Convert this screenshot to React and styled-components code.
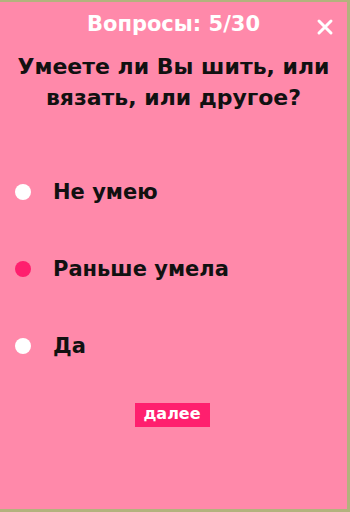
import React, { useState } from "react";
import styled, { createGlobalStyle } from "styled-components";

const GlobalStyle = createGlobalStyle`
  html, body {
    margin: 0;
    padding: 0;
    background: #b3b27d;
  }
`;

const Screen = styled.div`
  box-sizing: border-box;
  width: 350px;
  height: 512px;
  background: #ff89aa;
  border-top: 2px solid #b3b27d;
  border-right: 3px solid #b3b27d;
  border-bottom: 3px solid #b3b27d;
  font-family: "DejaVu Sans", "Noto Sans", sans-serif;
  display: flex;
  flex-direction: column;
`;

const Header = styled.div`
  display: grid;
  grid-template-columns: 1fr auto 1fr;
  align-items: center;
  padding-top: 7px;
  height: 30px;
`;

const Counter = styled.div`
  grid-column: 2;
  color: #fff;
  font-size: 21px;
  font-weight: bold;
`;

const Close = styled.button`
  justify-self: end;
  margin-right: 12px;
  margin-top: 6px;
  background: none;
  border: none;
  padding: 0;
  width: 20px;
  height: 20px;
  cursor: pointer;
`;

const Question = styled.h1`
  margin: 12px 0 0;
  text-align: center;
  color: #111;
  font-size: 22px;
  line-height: 31px;
  font-weight: bold;
`;

const Options = styled.div`
  display: flex;
  flex-direction: column;
  gap: 47px;
  margin-top: 64px;
  padding-left: 15px;
`;

const Option = styled.label`
  display: flex;
  align-items: center;
  gap: 22px;
  height: 30px;
  cursor: pointer;
  color: #111;
  font-size: 21px;
  font-weight: bold;
`;

const Dot = styled.span`
  width: 16px;
  height: 16px;
  border-radius: 50%;
  background: ${({ $active }) => ($active ? "#ff1f6e" : "#fff")};
`;

const Footer = styled.div`
  display: flex;
  justify-content: center;
  margin-top: 42px;
  padding-right: 3px;
`;

const Next = styled.button`
  background: #ff1f6e;
  color: #fff;
  border: none;
  width: 75px;
  height: 24px;
  padding: 0 0 3px;
  font-family: inherit;
  font-size: 16px;
  font-weight: 600;
  cursor: pointer;
`;

const answers = ["Не умею", "Раньше умела", "Да"];

export default function App() {
  const [selected, setSelected] = useState(1);
  return (
    <>
      <GlobalStyle />
      <Screen>
        <Header>
          <Counter>Вопросы: 5/30</Counter>
          <Close aria-label="close">
            <svg width="20" height="20" viewBox="0 0 20 20">
              <path d="M4 4 L16 16 M16 4 L4 16" stroke="#fff" strokeWidth="3" strokeLinecap="round" />
            </svg>
          </Close>
        </Header>
        <Question>
          Умеете ли Вы шить, или
          <br />
          вязать, или другое?
        </Question>
        <Options>
          {answers.map((a, i) => (
            <Option key={a} onClick={() => setSelected(i)}>
              <Dot $active={i === selected} />
              {a}
            </Option>
          ))}
        </Options>
        <Footer>
          <Next>далее</Next>
        </Footer>
      </Screen>
    </>
  );
}
